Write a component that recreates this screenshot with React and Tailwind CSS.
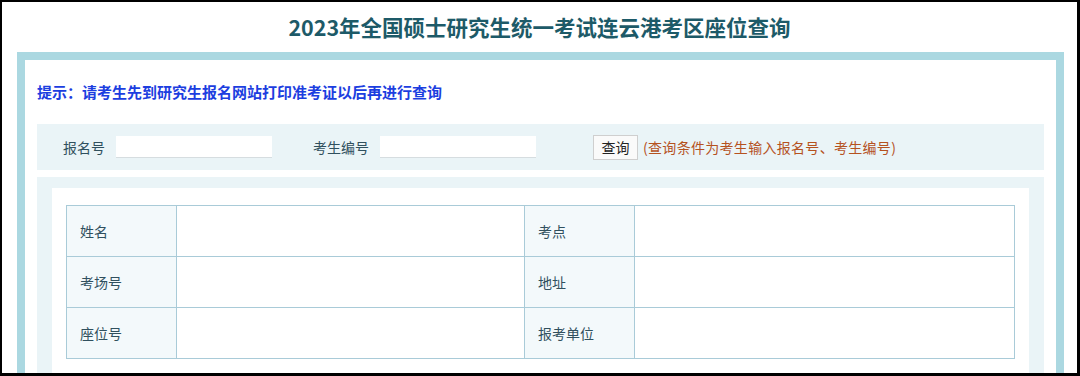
const rows = [
  ["姓名", "考点"],
  ["考场号", "地址"],
  ["座位号", "报考单位"],
];

const font = { fontFamily: '"Noto Sans CJK SC", "Noto Sans", sans-serif' };

export default function App() {
  return (
    <div className="h-[376px] bg-black pt-[2px] pl-[2px] pr-[3px] pb-[3px]" style={font}>
      <div className="h-full overflow-hidden bg-white">
        <h1 className="flex h-[50px] items-center justify-center text-[21.5px] font-bold text-[#1d5a68]">
          2023年全国硕士研究生统一考试连云港考区座位查询
        </h1>
        <div className="ml-[15px] w-[1047px] border-[8px] border-b-0 border-[#abd8e1] bg-white px-[12px]">
          <p className="pt-[22px] pb-[23px] text-[15px] leading-[19px] font-bold text-[#1c3ee0]">
            提示：请考生先到研究生报名网站打印准考证以后再进行查询
          </p>
          <div className="flex h-[46px] items-center bg-[#eaf4f7] pl-[26px] text-[14px] text-[#30505e]">
            <span>报名号</span>
            <input className="ml-[11px] h-[22px] w-[156px] bg-white shadow-[inset_0_-1px_0_#d6dde0] outline-none" />
            <span className="ml-[41px]">考生编号</span>
            <input className="ml-[11px] h-[22px] w-[156px] bg-white shadow-[inset_0_-1px_0_#d6dde0] outline-none" />
            <button className="ml-[57px] h-[25px] w-[45px] border border-[#cfcfcf] bg-[#fafafa] text-[14px] text-[#222]">
              查询
            </button>
            <span className="ml-[5px] text-[#b5521f] tracking-[0.3px]">(查询条件为考生输入报名号、考生编号)</span>
          </div>
          <div className="mt-[7px] h-[200px] bg-[#eaf4f7] px-[15px] pt-[11px]">
            <div className="h-full bg-white px-[14px] pt-[17px]">
              <table className="w-[949px] border-collapse text-[14px] text-[#30505e]">
                <tbody>
                  {rows.map(([a, b]) => (
                    <tr key={a} className="h-[51px]">
                      <td className="w-[110px] border border-[#a9cbd8] bg-[#f3f9fb] pl-[13px]">{a}</td>
                      <td className="w-[348px] border border-[#a9cbd8]"></td>
                      <td className="w-[110px] border border-[#a9cbd8] bg-[#f3f9fb] pl-[13px]">{b}</td>
                      <td className="border border-[#a9cbd8]"></td>
                    </tr>
                  ))}
                </tbody>
              </table>
            </div>
          </div>
        </div>
      </div>
    </div>
  );
}
